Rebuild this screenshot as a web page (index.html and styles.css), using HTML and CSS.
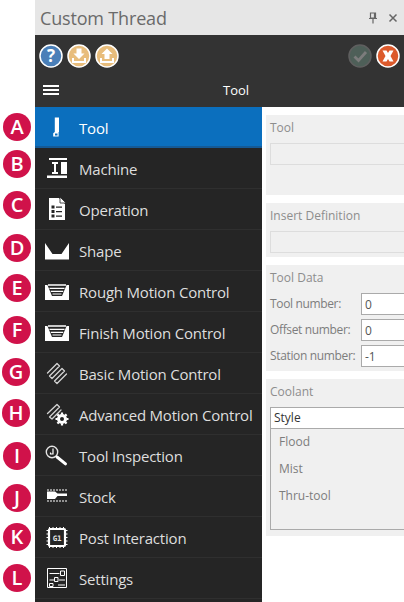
FILE: index.html
```html
<!DOCTYPE html>
<html lang="en">
<head>
<meta charset="utf-8">
<title>Custom Thread</title>
<link rel="stylesheet" href="styles.css">
</head>
<body>
<div class="callouts">
  <span class="badge b-a">A</span><span class="badge b-b">B</span><span class="badge b-c">C</span>
  <span class="badge b-d">D</span><span class="badge b-e">E</span><span class="badge b-f">F</span>
  <span class="badge b-g">G</span><span class="badge b-h">H</span><span class="badge b-i">I</span>
  <span class="badge b-j">J</span><span class="badge b-k">K</span><span class="badge b-l">L</span>
</div>
<main class="window">
  <header class="titlebar">
    <h1 class="title">Custom Thread</h1>
    <div class="winctl">
      <svg width="10" height="12" viewBox="0 0 10 12"><path d="M2.500 1h5v5h-5zM1 6.500h8M5 7v4.500M6.500 1v5" fill="none" stroke="#666" stroke-width="1.200"/></svg>
      <svg width="10" height="10" viewBox="0 0 10 10"><path d="M1.500 1.500l7 7M8.500 1.500l-7 7" stroke="#666" stroke-width="1.500"/></svg>
    </div>
  </header>
  <div class="toolbar">
    <div class="btns">
      <svg class="rb" viewBox="0 0 24 24"><circle cx="12" cy="12" r="11" fill="#4a7fb8" stroke="#fff" stroke-width="1.500"/><text x="12" y="18" class="q">?</text></svg>
      <svg class="rb" viewBox="0 0 24 24"><circle cx="12" cy="12" r="11" fill="#e8bd7c" stroke="#fff" stroke-width="1.500"/><path d="M9.500 4.500h5v5h3L12 15 6.500 9.500h3zM5 14h2v3h10v-3h2v5H5z" fill="#fff"/></svg>
      <svg class="rb" viewBox="0 0 24 24"><circle cx="12" cy="12" r="11" fill="#e8bd7c" stroke="#fff" stroke-width="1.500"/><path d="M9.500 15h5v-5h3L12 4.500 6.500 10h3zM5 14h2v3h10v-3h2v5H5z" fill="#fff"/></svg>
    </div>
    <div class="btns">
      <svg class="rb" viewBox="0 0 24 24"><circle cx="12" cy="12" r="11" fill="#4e5f58" stroke="#5f5f5f" stroke-width="1.500"/><path d="M6.500 12.500l4 4 7.500-8.500" fill="none" stroke="#7c7c7c" stroke-width="2.800"/></svg>
      <svg class="rb" viewBox="0 0 24 24"><circle cx="12" cy="12" r="11" fill="#dc5a2c" stroke="#fff" stroke-width="1.500"/><path d="M6.500 6.500h4L12 9l1.500-2.500h4L14.500 12l3 5.500h-4L12 15l-1.500 2.500h-4l3-5.500z" fill="#fff"/></svg>
    </div>
  </div>
  <div class="navhead">
    <span class="burger"></span>
    <span class="navtitle">Tool</span>
  </div>
  <div class="body">
    <nav class="nav">
      <a class="item active">
        <span class="ico"><svg width="26" height="26" viewBox="0 0 26 26"><path d="M9.800 2.500H14v14.500h-.4v4.500H8.200v-3.200l1.600-1.300z" fill="#fff"/><path d="M10 18.500h2.500v2H10z" fill="#0b6fbe"/></svg></span>Tool</a>
      <a class="item">
        <span class="ico"><svg width="26" height="26" viewBox="0 0 26 26" fill="#fff"><path d="M4 2h18v2H4zM7 6h6v2h-2v8h2v2H7v-2h2V8H7zM16 6h6v12h-6zM2 19.500h20V22H2z"/></svg></span>Machine</a>
      <a class="item">
        <span class="ico"><svg width="26" height="26" viewBox="0 0 26 26"><path d="M4 1h10l6 6v16H4z" fill="#fff"/><path d="M15 0l6 6h-6z" fill="#fff" stroke="#252525" stroke-width=".8"/><path d="M6.500 8.500h3v3h-3zM6.500 13h3v3h-3zM6.500 17.500h3v3h-3zM11 9.500h6v1.200h-6zM11 14h6v1.200h-6zM11 18.500h6v1.200h-6z" fill="#252525"/></svg></span>Operation</a>
      <a class="item">
        <span class="ico"><svg width="24" height="17" viewBox="0 0 24 17"><path d="M0 0l7.500 11h9L24 0v16.500H0z" fill="#fff"/></svg></span>Shape</a>
      <a class="item">
        <span class="ico"><svg width="24" height="17" viewBox="0 0 24 17"><path d="M0 1h24v15H0z" fill="#fff"/><path d="M2 0h20l-5 12H7z" fill="#252525"/><path d="M3 1h18M4.500 4.300h15M5.800 7.300h12.400" stroke="#fff" stroke-width="1.300"/><path d="M7.500 10h9" stroke="#fff" stroke-width="1"/></svg></span>Rough Motion Control</a>
      <a class="item">
        <span class="ico"><svg width="24" height="17" viewBox="0 0 24 17"><path d="M0 1h24v15H0z" fill="#fff"/><path d="M2 0h20l-5 12H7z" fill="#252525"/><path d="M3 1h18M4.500 4.300h15M5.800 7.300h12.400" stroke="#fff" stroke-width="1.300"/><path d="M7.500 10h9" stroke="#fff" stroke-width="1"/></svg></span>Finish Motion Control</a>
      <a class="item">
        <span class="ico"><svg width="26" height="26" viewBox="0 0 26 26"><path d="M2.500 12L12 2.500 14.500 5l-10 10L7 17.500l10-10L19.500 10l-10 10 2.500 2.500 9.500-9.500" fill="none" stroke="#d4d4d4" stroke-width="1.300" stroke-linejoin="round" stroke-linecap="round"/></svg></span>Basic Motion Control</a>
      <a class="item">
        <span class="ico"><svg width="26" height="26" viewBox="0 0 26 26"><path d="M2.500 11.500L12 2.500 14.500 5l-10 10L7 17l9-9" fill="none" stroke="#d4d4d4" stroke-width="1.300" stroke-linejoin="round" stroke-linecap="round"/><circle cx="17" cy="17" r="3.500" fill="none" stroke="#fff" stroke-width="3"/><path d="M17 10.500v13M10.500 17h13M12.400 12.400l9.200 9.200M21.600 12.400l-9.200 9.200" stroke="#fff" stroke-width="2.200" stroke-dasharray="2 9"/></svg></span>Advanced Motion Control</a>
      <a class="item">
        <span class="ico"><svg width="26" height="26" viewBox="0 0 26 26"><circle cx="7" cy="9" r="5.700" fill="none" stroke="#e4e4e4" stroke-width="1.400"/><path d="M8 5.500v5.500H5.500V9.500" fill="none" stroke="#fff" stroke-width="1.200"/><path d="M12 14l8.500 6.800" stroke="#fff" stroke-width="3" stroke-linecap="round"/></svg></span>Tool Inspection</a>
      <a class="item">
        <span class="ico"><svg width="26" height="26" viewBox="0 0 26 26"><path d="M2 6h20M2 17h20" stroke="#fff" stroke-width="1" stroke-dasharray="2 1"/><path d="M2 7.500h8l2.500 2h9.500v2.500h-9.500l-2.500 3H2z" fill="#fff"/></svg></span>Stock</a>
      <a class="item">
        <span class="ico"><svg width="26" height="26" viewBox="0 0 26 26"><path d="M5 4h14a1 1 0 0 1 1 1v15a1 1 0 0 1-1 1H5a1 1 0 0 1-1-1V5a1 1 0 0 1 1-1z" fill="#252525" stroke="#fff" stroke-width="2.200"/><path d="M4.500 2v21M8 2v21M11.500 2v21M15 2v21M18.500 2v21M1.500 5.500h21M1.500 9h21M1.500 12.500h21M1.500 16h21M1.500 19.500h21" stroke="#fff" stroke-width="1" stroke-dasharray="2.200 16.600"/><text x="12" y="16" class="chip">G1</text></svg></span>Post Interaction</a>
      <a class="item">
        <span class="ico"><svg width="26" height="26" viewBox="0 0 26 26"><g fill="none" stroke="#fff" stroke-width="1"><path d="M2.500 2.500h19v19h-19zM4.500 7.500h10M4.500 14h5M14 14h6M13 19h7"/><path d="M15.500 5h4v4.500h-4zM9.500 11.500H13v4H9.500zM4.500 17.500H8v3H4.500z"/></g></svg></span>Settings</a>
    </nav>
    <section class="content">
      <div class="panel p-tool">
        <div class="ptitle">Tool</div>
        <div class="field"></div>
      </div>
      <div class="panel p-insert">
        <div class="ptitle">Insert Definition</div>
        <div class="field"></div>
      </div>
      <div class="panel p-data">
        <div class="ptitle">Tool Data</div>
        <div class="row"><label>Tool number:</label><span class="input">0</span></div>
        <div class="row"><label>Offset number:</label><span class="input">0</span></div>
        <div class="row"><label>Station number:</label><span class="input">-1</span></div>
      </div>
      <div class="panel p-cool">
        <div class="ptitle">Coolant</div>
        <div class="list">
          <div class="lhead">Style</div>
          <div class="opt">Flood</div>
          <div class="opt">Mist</div>
          <div class="opt">Thru-tool</div>
        </div>
      </div>
    </section>
  </div>
</main>
</body>
</html>
```
FILE: styles.css
```css
* { box-sizing: border-box; }
html, body { margin: 0; height: 100%; }
body {
  width: 404px; height: 602px; overflow: hidden; background: #fff; position: relative;
  font-family: "Open Sans", "Noto Sans", sans-serif; padding-left: 35px;
}
.window { width: 369px; height: 602px; display: flex; flex-direction: column; }
.titlebar { height: 35px; background: #e6e6e6; display: flex; align-items: center; justify-content: space-between; padding: 0 6px 0 5px; flex: none; }
.title { margin: 0; font-size: 18px; font-weight: 400; color: #6a6a6a; letter-spacing: -.17px; }
.winctl { display: flex; align-items: center; gap: 10px; }
.toolbar { height: 37px; background: #333; display: flex; justify-content: space-between; align-items: center; padding: 4px 4px 0 4px; flex: none; }
.btns { display: flex; gap: 4px; }
.rb { width: 24px; height: 24px; display: block; }
.q { font: 700 17px "Open Sans", sans-serif; fill: #fff; text-anchor: middle; }
.navhead { height: 35px; background: #333; display: flex; align-items: center; position: relative; flex: none; padding-left: 8px; }
.burger { width: 16px; height: 10px; border-top: 2px solid #fff; border-bottom: 2px solid #fff; position: relative; }
.burger::after { content: ""; position: absolute; left: 0; right: 0; top: 2px; height: 2px; background: #fff; }
.navtitle { position: absolute; left: 188px; font-size: 13px; color: #fff; }
.body { flex: 1; display: flex; min-height: 0; }
.nav { width: 227px; background: #252525; flex: none; }
.item { height: 41px; padding-top: 2px; display: flex; align-items: center; font-size: 15px; letter-spacing: -.2px; color: #dedede; border-bottom: 1px solid #2f2f2f; }
.item.active { background: #0b6fbe; border-bottom: 2px solid #155a96; color: #fff; }
.ico { width: 44px; padding-left: 10px; display: flex; align-items: center; height: 26px; flex: none; }
.chip { font: 700 7.500px "DejaVu Sans Mono", monospace; fill: #e4e4e4; text-anchor: middle; }
.content { flex: 1; padding: 8px 0 0 4px; display: flex; flex-direction: column; gap: 8px; font-size: 12px; color: #8d8d8d; min-width: 0; }
.panel { background: #f0f0f0; padding: 4px 0 0 4px; }
.p-tool { height: 80px; }
.p-insert { height: 54px; }
.p-data { height: 106px; }
.p-cool { height: 157px; }
.ptitle { height: 24px; line-height: 18px; }
.field { height: 22px; border: 1px solid #ddd; border-right: 0; }
.row { display: flex; height: 26px; align-items: flex-start; color: #7d7d7d; }
.row label { width: 91px; line-height: 22px; white-space: nowrap; letter-spacing: -.35px; }
.input { flex: 1; height: 22px; background: #fff; border: 1px solid #aaa; border-right: 0; line-height: 21px; padding-left: 3px; color: #555; }
.list { height: 123px; border: 1px solid #aaa; border-right: 0; border-top: 0; }
.lhead { height: 22px; background: #fff; border: 1px solid #aaa; border-right: 0; margin-left: -1px; line-height: 20px; padding-left: 3px; color: #333; margin-bottom: -1px; }
.opt { height: 27px; line-height: 27px; padding-left: 8px; color: #7d7d7d; }
.callouts { position: absolute; inset: 0; pointer-events: none; }
.badge { position: absolute; left: 3px; width: 28px; height: 28px; border-radius: 50%; background: #d0124a; color: #fff; font: 600 20px/28px "Open Sans", sans-serif; text-align: center; }
.b-a { top: 113px; } .b-b { top: 150px; } .b-c { top: 191px; } .b-d { top: 234px; }
.b-e { top: 274px; } .b-f { top: 316px; } .b-g { top: 358px; left: 2px; } .b-h { top: 399px; left: 2px; }
.b-i { top: 442px; } .b-j { top: 484px; } .b-k { top: 523px; } .b-l { top: 564px; }
```
